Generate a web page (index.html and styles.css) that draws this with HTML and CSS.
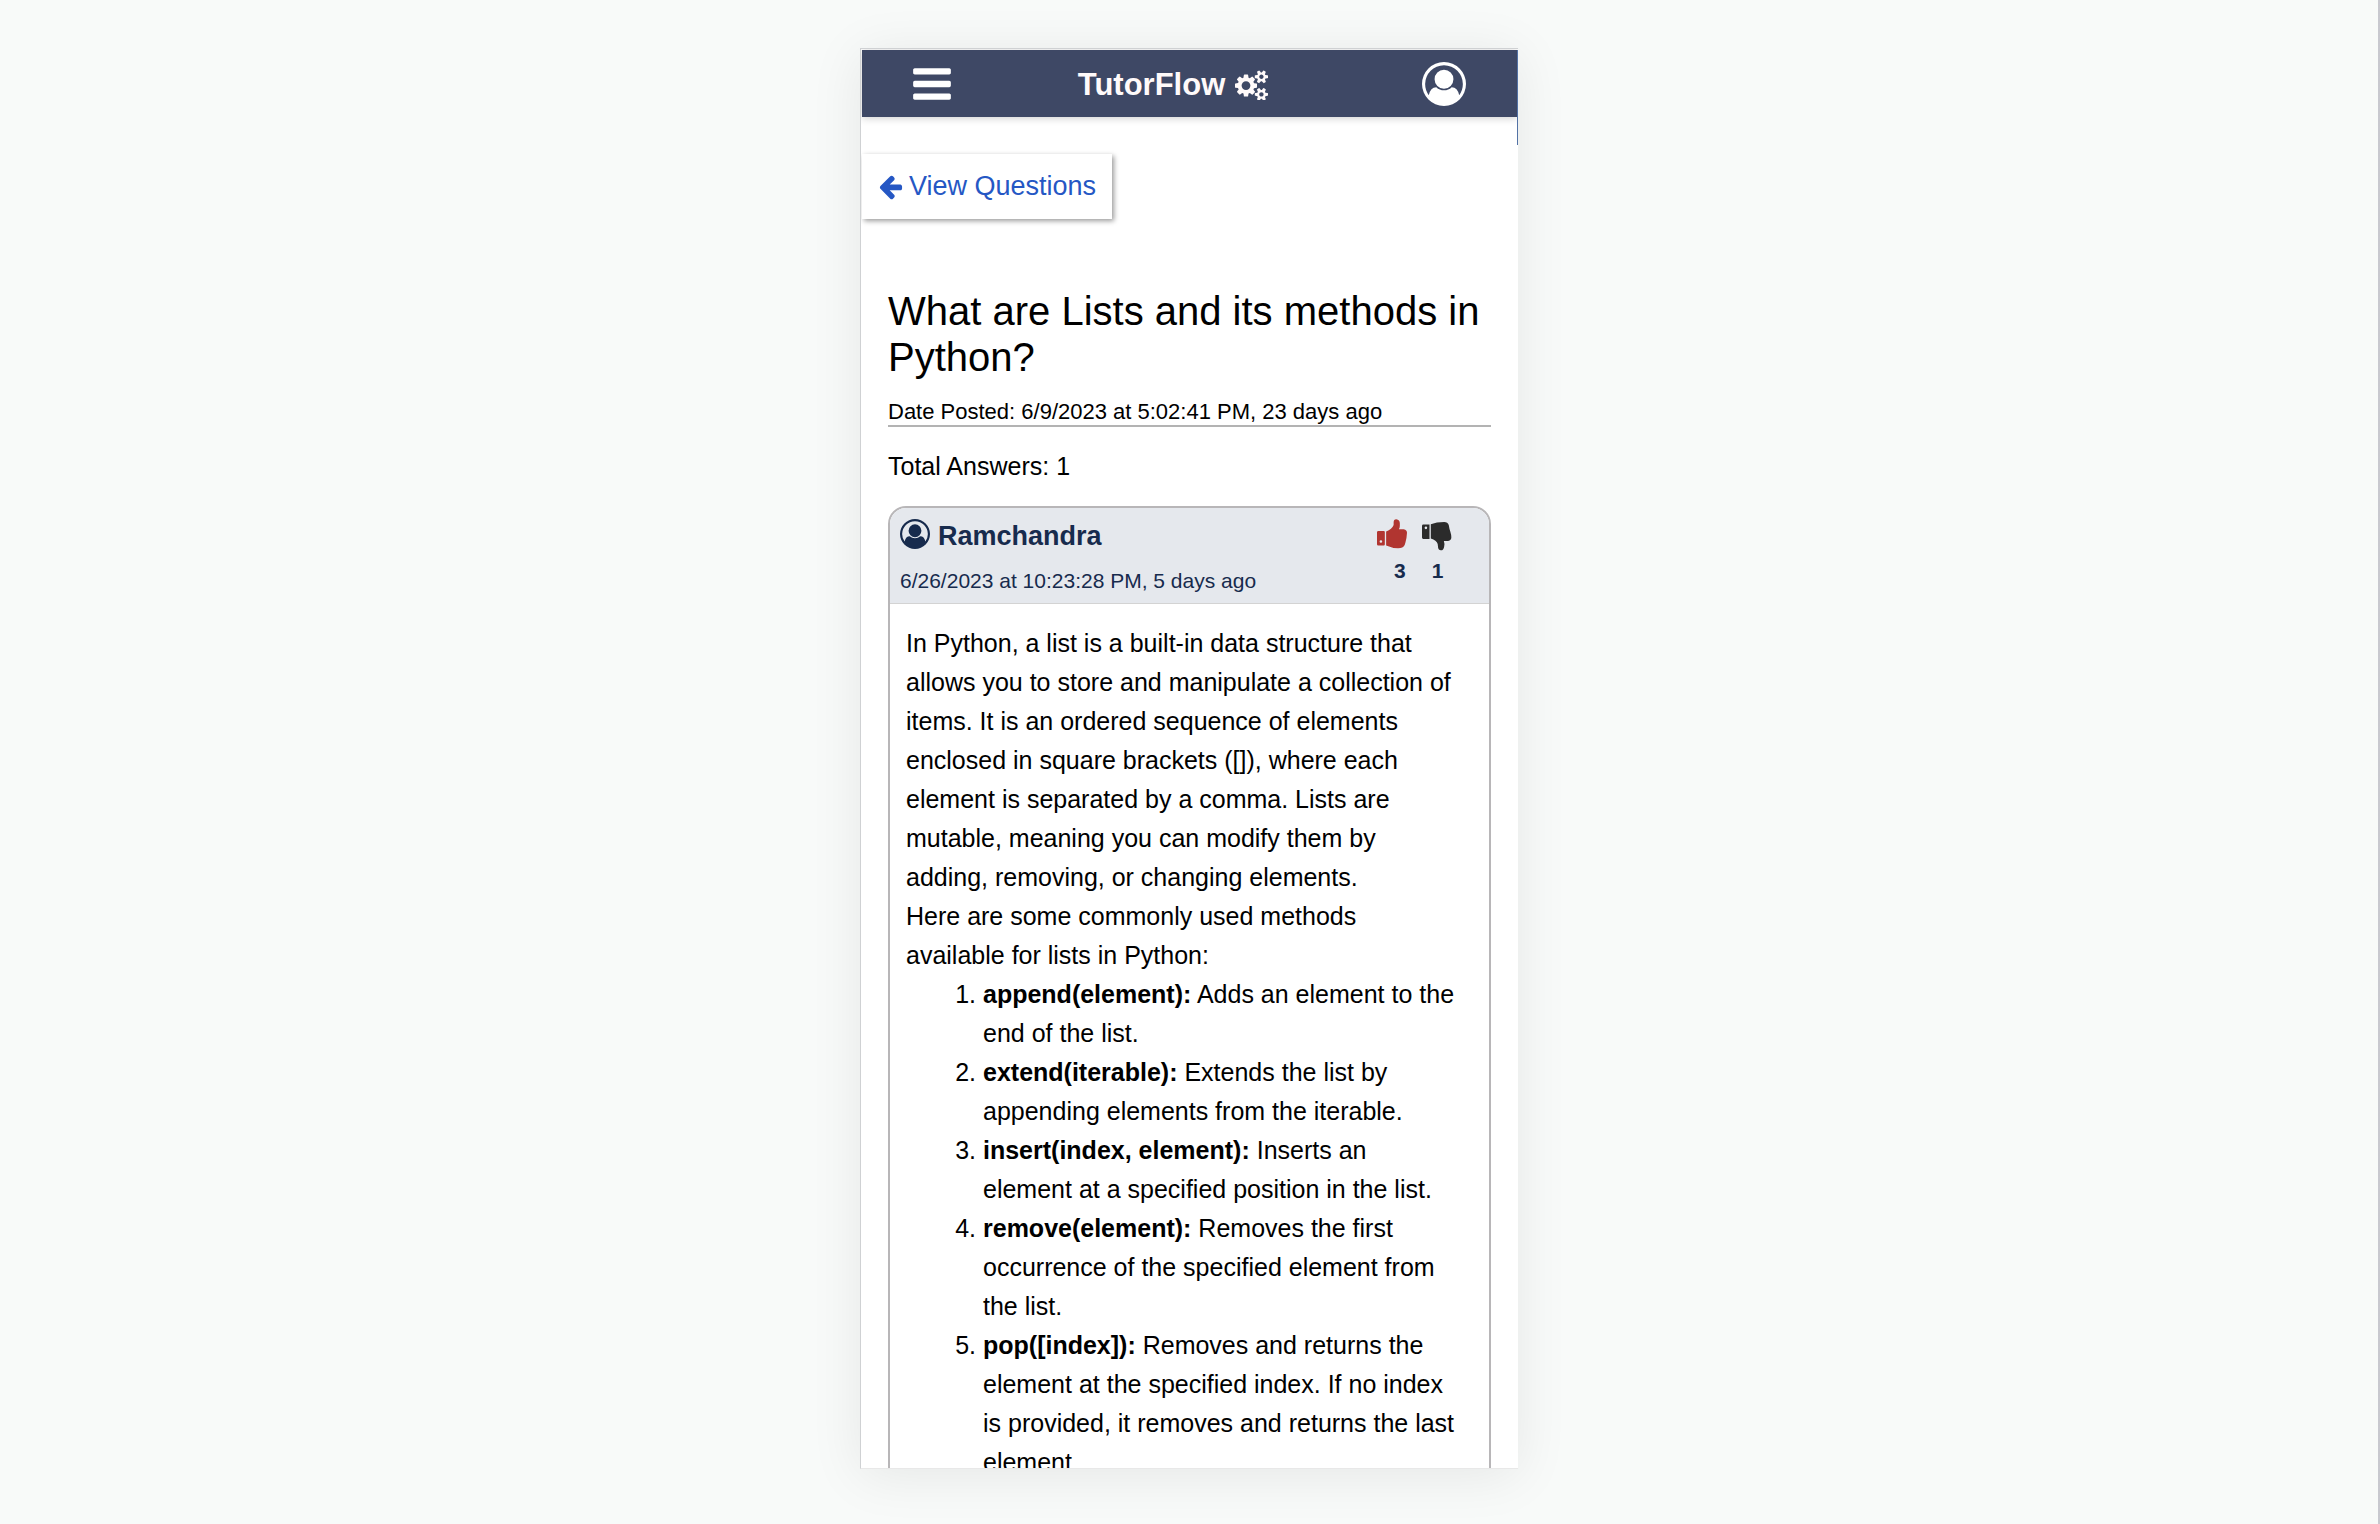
FILE: index.html
```html
<!DOCTYPE html>
<html lang="en">
<head>
<meta charset="utf-8">
<meta name="viewport" content="width=device-width, initial-scale=1">
<title>TutorFlow</title>
<link rel="stylesheet" href="styles.css">
</head>
<body>
<div class="app">
  <header class="topbar">
    <button class="icon-button" type="button" aria-label="Menu">
      <svg class="icon-large" viewBox="0 0 1792 1792" aria-hidden="true"><path d="M1664 1344v128q0 26-19 45t-45 19h-1408q-26 0-45-19t-19-45v-128q0-26 19-45t45-19h1408q26 0 45 19t19 45zm0-512v128q0 26-19 45t-45 19h-1408q-26 0-45-19t-19-45v-128q0-26 19-45t45-19h1408q26 0 45 19t19 45zm0-512v128q0 26-19 45t-45 19h-1408q-26 0-45-19t-19-45v-128q0-26 19-45t45-19h1408q26 0 45 19t19 45z"/></svg>
    </button>
    <a class="brand" href="#">
      <span>TutorFlow</span>
      <svg class="brand-icon" viewBox="0 0 1920 1792" aria-hidden="true"><path d="M896 960q0-106-75-181t-181-75-181 75-75 181 75 181 181 75 181-75 75-181zm768 512q0-52-38-90t-90-38-90 38-38 90q0 53 37.5 90.5t90.5 37.5 90.5-37.5 37.5-90.5zm0-1024q0-52-38-90t-90-38-90 38-38 90q0 53 37.5 90.5t90.5 37.5 90.5-37.5 37.5-90.5zm-384 421v185q0 10-7 19.5t-16 10.5l-155 24q-11 35-32 76 34 48 90 115 7 11 7 20 0 12-7 19-23 30-82.5 89.5t-78.5 59.5q-11 0-21-7l-115-90q-37 19-77 31-11 108-23 155-7 24-30 24h-186q-11 0-20-7.5t-10-17.5l-23-153q-34-10-75-31l-118 89q-7 7-20 7-11 0-21-8-144-133-144-160 0-9 7-19 10-14 41-53t47-61q-23-44-35-82l-152-24q-10-1-17-9.5t-7-19.5v-185q0-10 7-19.5t16-10.5l155-24q11-35 32-76-34-48-90-115-7-11-7-20 0-12 7-20 22-30 82-89t79-59q11 0 21 7l115 90q34-18 77-32 11-108 23-154 7-24 30-24h186q11 0 20 7.5t10 17.5l23 153q34 10 75 31l118-89q8-7 20-7 11 0 21 8 144 133 144 160 0 8-7 19-12 16-42 54t-45 60q23 48 34 82l152 23q10 2 17 10.5t7 19.5zm640 533v140q0 16-149 31-12 27-30 52 51 113 51 138 0 4-4 7-122 71-124 71-8 0-46-47t-52-68q-20 2-30 2t-30-2q-14 21-52 68t-46 47q-2 0-124-71-4-3-4-7 0-25 51-138-18-25-30-52-149-15-149-31v-140q0-16 149-31 13-29 30-52-51-113-51-138 0-4 4-7 4-2 35-20t59-34 30-16q8 0 46 46.5t52 67.5q20-2 30-2t30 2q51-71 92-112l6-2q4 0 124 70 4 3 4 7 0 25-51 138 17 23 30 52 149 15 149 31zm0-1024v140q0 16-149 31-12 27-30 52 51 113 51 138 0 4-4 7-122 71-124 71-8 0-46-47t-52-68q-20 2-30 2t-30-2q-14 21-52 68t-46 47q-2 0-124-71-4-3-4-7 0-25 51-138-18-25-30-52-149-15-149-31v-140q0-16 149-31 13-29 30-52-51-113-51-138 0-4 4-7 4-2 35-20t59-34 30-16q8 0 46 46.5t52 67.5q20-2 30-2t30 2q51-71 92-112l6-2q4 0 124 70 4 3 4 7 0 25-51 138 17 23 30 52 149 15 149 31z"/></svg>
    </a>
    <button class="icon-button" type="button" aria-label="Account">
      <svg class="icon-large" viewBox="0 0 1792 1792" aria-hidden="true"><path id="user-circle" d="M896 0q182 0 348 71t286 191 191 286 71 348q0 181-70.500 347t-190.500 286-286 191.500-349 71.500-349-71-285.500-191.500-190.500-286-71-347.500 71-348 191-286 286-191 348-71zm619 1351q149-205 149-455 0-156-61-298t-164-245-245-164-298-61-298 61-245 164-164 245-61 298q0 250 149 455 66-327 306-327 131 128 313 128t313-128q240 0 306 327zm-235-647q0-159-112.500-271.500t-271.500-112.500-271.500 112.500-112.500 271.500 112.500 271.500 271.500 112.500 271.500-112.500 112.500-271.500z"/></svg>
    </button>
  </header>

  <nav>
    <a class="back-link" href="#">
      <svg class="back-icon" viewBox="0 0 1792 1792" aria-hidden="true"><path d="M1664 896v128q0 53-32.500 90.500t-84.500 37.500h-704l293 294q38 36 38 90t-38 90l-75 76q-37 37-90 37-52 0-91-37l-651-652q-37-37-37-90 0-52 37-91l651-650q38-38 91-38 52 0 90 38l75 74q38 38 38 91t-38 91l-293 293h704q52 0 84.500 37.500t32.500 90.500z"/></svg>
      <span>View Questions</span>
    </a>
  </nav>

  <main class="question">
    <h1 class="question-title">What are Lists and its methods in Python?</h1>
    <p class="question-date">Date Posted: 6/9/2023 at 5:02:41 PM, 23 days ago</p>
    <p class="answer-count">Total Answers: 1</p>

    <article class="answer">
      <header class="answer-header">
        <div>
          <h2 class="author">
            <svg class="author-icon" viewBox="0 0 1792 1792" aria-hidden="true"><use href="#user-circle"/></svg>
            <span>Ramchandra</span>
          </h2>
          <p class="answer-date">6/26/2023 at 10:23:28 PM, 5 days ago</p>
        </div>
        <div class="votes">
          <div class="vote-buttons">
            <button class="icon-button vote-up" type="button" aria-label="Upvote">
              <svg class="vote-icon" viewBox="0 0 92 99" aria-hidden="true"><path fill-rule="evenodd" d="M4 36H21Q24 36 24 39V77Q24 80 21 80H4Q0 80 0 76V40Q0 36 4 36ZM12 64A4 4 0 0 0 12 72A4 4 0 0 0 12 64ZM28 37Q46 30 51 17V9Q51 0 59 0Q70 2 70 12V20Q70 25 67 30H82Q92 32 92 41Q91 60 87 72Q84 87 72 88Q50 90 28 80Z"/></svg>
            </button>
            <button class="icon-button vote-down" type="button" aria-label="Downvote">
              <svg class="vote-icon" viewBox="0 0 92 99" aria-hidden="true"><path fill-rule="evenodd" d="M4 16H23V60H4Q0 60 0 56V20Q0 16 4 16ZM12 22A4 4 0 0 0 12 30A4 4 0 0 0 12 22ZM27 15Q44 8 68 8Q79 8 82 17Q84 29 87 38Q90 48 90 55Q90 65 80 66H67Q70 74 68 83Q66 95 58 95Q49 94 49 83Q49 68 35 62Q31 60 27 59Z"/></svg>
            </button>
          </div>
          <div class="vote-counts"><span>3</span><span>1</span></div>
        </div>
      </header>
      <div class="answer-body">
        <p>In Python, a list is a built-in data structure that allows you to store and manipulate a collection of items. It is an ordered sequence of elements enclosed in square brackets ([]), where each element is separated by a comma. Lists are mutable, meaning you can modify them by adding, removing, or changing elements.</p>
        <p>Here are some commonly used methods available for lists in Python:</p>
        <ol class="methods">
          <li><strong>append(element):</strong> Adds an element to the end of the list.</li>
          <li><strong>extend(iterable):</strong> Extends the list by appending elements from the iterable.</li>
          <li><strong>insert(index, element):</strong> Inserts an element at a specified position in the list.</li>
          <li><strong>remove(element):</strong> Removes the first occurrence of the specified element from the list.</li>
          <li><strong>pop([index]):</strong> Removes and returns the element at the specified index. If no index is provided, it removes and returns the last element.</li>
        </ol>
      </div>
    </article>
  </main>
</div>
</body>
</html>
```
FILE: styles.css
```css
*,
*::before,
*::after {
  box-sizing: border-box;
}

body {
  margin: 0;
  min-height: 100vh;
  padding: 48px 0 55px;
  border-right: 2px solid #c8c8cf;
  background: #f8faf9;
  color: #000;
  font-family: "Liberation Sans", Arial, sans-serif;
  font-size: 25px;
  line-height: 39px;
}

h1,
h2,
p,
ol {
  margin: 0;
}

a {
  text-decoration: none;
}

svg {
  display: block;
  fill: currentColor;
}

.icon-button {
  padding: 0;
  border: 0;
  background: none;
  color: inherit;
  cursor: pointer;
}

/* Phone-width panel, cut off at the bottom of the window */
.app {
  position: relative;
  max-width: 658px;
  height: calc(100vh - 103px);
  margin: 0 auto;
  padding: 1px 1px 0;
  overflow: hidden;
  border: 1px solid #cfd1d3;
  border-right: 0;
  border-bottom-color: #e8e8e8;
  background: #fff;
  box-shadow: 0 6px 50px rgba(0, 0, 0, 0.08);
}

/* Scroll indicator */
.app::after {
  content: "";
  position: absolute;
  top: 1px;
  right: 0;
  width: 1px;
  height: 95px;
  background: #5372a5;
}

.topbar {
  display: flex;
  align-items: center;
  justify-content: space-between;
  height: 67px;
  padding: 1px 51px 0 48px;
  background: #3e4865;
  color: #fff;
  box-shadow: 0 1px 8px rgba(0, 0, 0, 0.2);
}

.icon-large {
  width: 44px;
  height: 44px;
}

.brand {
  display: flex;
  align-items: center;
  gap: 10px;
  padding-right: 30px;
  color: #fffafa;
  font-size: 31px;
  font-weight: bold;
}

.brand-icon {
  width: 33px;
  height: 31px;
}

.back-link {
  display: inline-flex;
  align-items: center;
  gap: 5px;
  height: 65px;
  margin-top: 37px;
  padding: 0 16px 0 15px;
  background: #fff;
  box-shadow: 2px 2px 5px rgba(0, 0, 0, 0.4);
  color: #2557c4;
  font-size: 27px;
  vertical-align: top;
}

.back-icon {
  width: 27px;
  height: 27px;
}

.question {
  padding: 69px 26px 0;
}

.question-title {
  font-size: 40px;
  font-weight: normal;
  line-height: 46px;
}

.question-date {
  margin: 19px 0 20px;
  border-bottom: 2px solid #b3b3b3;
  font-size: 22px;
  line-height: 26px;
}

.answer {
  margin-top: 20px;
  overflow: hidden;
  border: 2px solid #b8b6b8;
  border-radius: 18px;
}

.answer-header {
  display: flex;
  justify-content: space-between;
  padding: 11px 37px 10px 10px;
  border-bottom: 1px solid #d3d3d3;
  background: #e5e8ed;
  color: #172b4d;
}

.author {
  display: flex;
  gap: 8px;
  font-size: 27px;
  line-height: 34px;
}

.author-icon {
  width: 30px;
  height: 30px;
}

.answer-date {
  margin-top: 16px;
  font-size: 21px;
  line-height: 24px;
}

.vote-buttons {
  display: flex;
  gap: 15px;
}

.vote-icon {
  width: 30px;
  height: 33px;
}

.vote-up {
  color: #b13530;
}

.vote-down {
  color: #2b2b2b;
}

.vote-counts {
  display: flex;
  gap: 26px;
  margin-top: 7px;
  padding-left: 17px;
  font-size: 21px;
  font-weight: bold;
  line-height: 24px;
}

.answer-body {
  padding: 20px 30px 20px 16px;
}

.methods {
  padding-left: 77px;
}
```
